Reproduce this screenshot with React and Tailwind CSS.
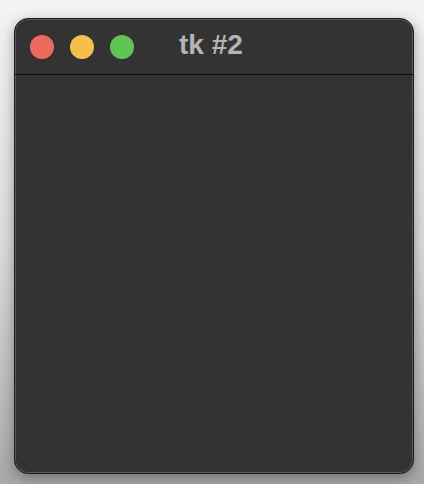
export default function App() {
  return (
    <div className="w-[424px] h-[484px] bg-gradient-to-b from-[#f4f4f4] via-[#dcdcdc] to-[#a9a9a9] pt-[18px] px-[14px] font-['Liberation_Sans',sans-serif]">
      <div className="w-[400px] h-[456px] rounded-[14px] border border-[#1c1c1c] bg-[#333333] shadow-[inset_0_0_0_1px_#5a5a5a,0_4px_14px_rgba(0,0,0,0.35)] overflow-hidden flex flex-col">
        <div className="relative h-[56px] flex items-center pl-[15px] gap-4 border-b border-[#0e0e0e]">
          <span className="w-6 h-6 rounded-full bg-[#ee6a5f]" />
          <span className="w-6 h-6 rounded-full bg-[#f5be4f]" />
          <span className="w-6 h-6 rounded-full bg-[#61c554]" />
          <span className="absolute left-[164px] top-[12px] text-[28px] leading-none font-bold text-[#b4b4b4]">
            tk #2
          </span>
        </div>
        <div className="flex-1" />
      </div>
    </div>
  );
}
